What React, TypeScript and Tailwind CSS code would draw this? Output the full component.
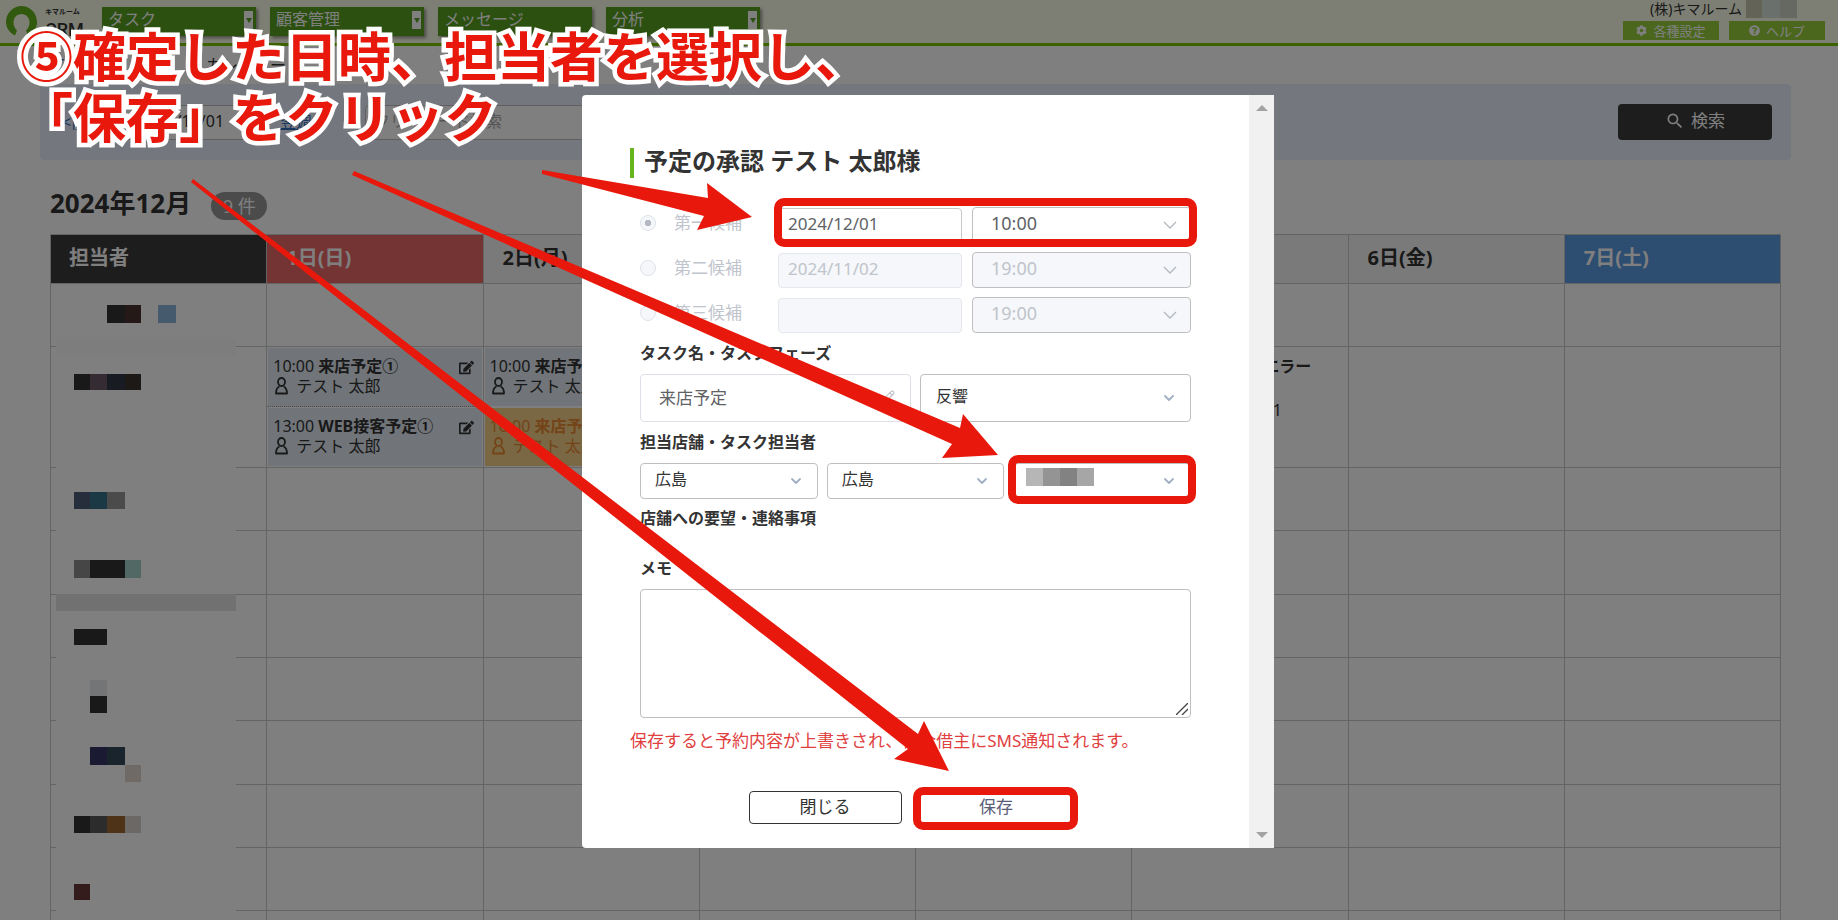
import React from 'react';
import { ChevronDown, Pencil } from 'lucide-react';
import { FaCog, FaEdit, FaQuestionCircle } from 'react-icons/fa';
import { MdSearch } from 'react-icons/md';

const MENUS = [
  { label: 'タスク', dropdown: true },
  { label: '顧客管理', dropdown: true },
  { label: 'メッセージ', dropdown: false },
  { label: '分析', dropdown: true },
];

const DAYS = [
  { label: '1日(日)', style: 'bg-[#ea6868] text-white' },
  { label: '2日(月)', style: 'bg-[#f5f5f5]' },
  { label: '3日(火)', style: 'bg-[#f5f5f5]' },
  { label: '4日(水)', style: 'bg-[#f5f5f5]' },
  { label: '5日(木)', style: 'bg-[#f5f5f5]' },
  { label: '6日(金)', style: 'bg-[#f5f5f5]' },
  { label: '7日(土)', style: 'bg-[#5a9ae2] text-white' },
];

const CANDIDATES = [
  { label: '第一候補', date: '2024/12/01', time: '10:00', active: true },
  { label: '第二候補', date: '2024/11/02', time: '19:00', active: false },
  { label: '第三候補', date: '', time: '19:00', active: false },
];

// Masked staff names: [x, y, width, height, color]
const MASKS: [number, number, number, number, string][] = [
  [0, 105, 180, 700, '#ffffff'],
  [0, 105, 180, 17, '#fafafa'],
  [51, 71, 18, 18, '#333333'],
  [69, 71, 16, 18, '#4a3330'],
  [102, 71, 18, 18, '#8ab4d8'],
  [18, 140, 16, 16, '#333333'],
  [34, 140, 17, 16, '#6a5766'],
  [51, 140, 18, 16, '#333645'],
  [69, 140, 16, 16, '#38332e'],
  [18, 258, 16, 17, '#4c5c78'],
  [34, 258, 17, 17, '#37708a'],
  [51, 258, 18, 17, '#969696'],
  [18, 326, 16, 18, '#8c8c8c'],
  [34, 326, 35, 18, '#333333'],
  [69, 326, 16, 18, '#a4d0c8'],
  [0, 360, 180, 17, '#e2e2e2'],
  [18, 395, 33, 16, '#333333'],
  [34, 446, 17, 16, '#e8eaee'],
  [34, 462, 17, 17, '#333333'],
  [34, 513, 17, 18, '#343464'],
  [51, 513, 18, 18, '#34485a'],
  [69, 531, 16, 17, '#dfd5cd'],
  [18, 582, 16, 17, '#333333'],
  [34, 582, 17, 17, '#585858'],
  [51, 582, 18, 17, '#9c6632'],
  [69, 582, 16, 17, '#d8d0ca'],
  [18, 650, 16, 16, '#683838'],
];

const Logo = () => (
  <a href="#" className="flex w-[82px] items-start gap-2 text-[#333]">
    <svg viewBox="0 0 31 30" className="h-[30px] w-[31px]">
      <path
        d="M9 29.5 C3 26.5 0 21.5 0 16 C0 7 7 0 15.500 0 C24 0 31 7 31 16 C31 21.500 28 26.500 22 29.500 L20 24.500 C22 22.500 23.500 20 23.500 16.500 C23.500 11.500 20 8 15.500 8 C11 8 7.500 11.500 7.500 16.500 C7.500 20 9 22.500 11 24.500 Z"
        fill="#65b51e"
      />
    </svg>
    <span className="flex flex-col gap-1 pt-0.5 whitespace-nowrap">
      <span className="text-[7px] leading-2 font-bold">キマルーム</span>
      <span className="font-['Roboto'] text-lg leading-5 font-medium">CRM</span>
    </span>
  </a>
);

const PersonIcon = () => (
  <svg viewBox="0 0 13 18" className="h-[18px] w-[13px]" fill="none" stroke="currentColor" strokeWidth="1.8">
    <ellipse cx="6.500" cy="5" rx="3.500" ry="4" />
    <path d="M4.500 9.500 C2 10.500 1 12.500 1 16.500 H12 C12 12.500 11 10.500 8.500 9.500" strokeLinejoin="round" />
  </svg>
);

type EventProps = { time: string; title: string; style: string };

const CalendarEvent: React.FC<EventProps> = ({ time, title, style }) => (
  <div className={`flex h-[60px] items-start justify-between overflow-hidden pt-2 pr-2 pl-[5px] leading-5 whitespace-nowrap ${style}`}>
    <div>
      <div className="flex gap-1">
        <span>{time}</span>
        <b>{title}</b>
      </div>
      <div className="flex items-center gap-2 pl-0.5">
        <PersonIcon />
        <span>テスト 太郎</span>
      </div>
    </div>
    <button type="button" aria-label="編集" className="pt-1">
      <FaEdit size={15} />
    </button>
  </div>
);

type SelectProps = {
  label: string;
  value: string;
  size?: string;
  disabled?: boolean;
  thin?: boolean;
  children?: React.ReactNode;
};

const Select: React.FC<SelectProps> = ({ label, value, size = 'h-9 pl-[14px] text-base', disabled, thin, children }) => (
  <div className="relative min-w-0 flex-1">
    <select
      aria-label={label}
      defaultValue={value}
      disabled={disabled}
      className={`block w-full appearance-none rounded border border-[#bfbfbf] pr-8 pb-1 opacity-100 outline-none ${size} ${
        disabled ? 'bg-[#f5f7fa] text-[#c0c4cc]' : thin ? 'bg-white text-[#606266]' : 'bg-white text-[#333]'
      }`}
    >
      <option value={value}>{value}</option>
    </select>
    <span className="pointer-events-none absolute inset-y-0 right-[14px] flex items-center">
      {thin ? (
        <svg viewBox="0 0 14 8" className="h-2 w-[14px]" fill="none" stroke="#b4b8c0" strokeWidth="1.3">
          <path d="M1 1 L7 7 L13 1" />
        </svg>
      ) : (
        <ChevronDown size={16} strokeWidth={2.8} className="text-[#a3b1c6]" />
      )}
    </span>
    {children}
  </div>
);

const Header = () => (
  <header className="flex h-[46px] items-start justify-between border-b-3 border-[#78c400] bg-[#fafee8] pr-[13px] pl-1.5">
    <div className="flex">
      <div className="w-24 pt-1.5">
        <Logo />
      </div>
      <nav className="flex gap-[14px] pt-[7px]">
        {MENUS.map(menu => (
          <button
            key={menu.label}
            type="button"
            className="flex h-[29px] w-[154px] items-start justify-between bg-[#56a020] pr-[3px] pl-1.5 text-base leading-6 text-white shadow-[2px_2px_3px_rgba(0,0,0,0.4)]"
          >
            {menu.label}
            {menu.dropdown && (
              <span className="mt-1 flex h-[18px] w-[9px] items-center justify-center bg-white text-[#56a020]">
                <svg viewBox="0 0 6 5" className="h-[5px] w-1.5">
                  <path d="M0 0 H6 L3 5 Z" fill="currentColor" />
                </svg>
              </span>
            )}
          </button>
        ))}
      </nav>
    </div>
    <div>
      <div className="flex h-[21px] items-start gap-1 pl-[27px] text-sm leading-[18px]">
        <span>(株)キマルーム</span>
        <span className="flex h-[18px]">
          <span className="w-4 bg-[#c8c6b0]" />
          <span className="w-[18px] bg-[#d4e2da]" />
          <span className="w-[17px] bg-[#cdd2c4]" />
        </span>
      </div>
      <div className="flex gap-2.5 text-[13px] text-white">
        <button type="button" className="flex h-[19px] w-24 items-center justify-center gap-1.5 bg-[#97cf3d] leading-4">
          <FaCog size={11} />
          各種設定
        </button>
        <button type="button" className="flex h-[19px] w-24 items-center justify-center gap-1.5 bg-[#97cf3d] leading-4">
          <FaQuestionCircle size={11} />
          ヘルプ
        </button>
      </div>
    </div>
  </header>
);

const SearchPanel = () => (
  <form className="mr-[47px] ml-10 flex h-[76px] items-center justify-between rounded bg-[#e9f1fc] pr-[19px] pl-[22px] text-base">
    <div className="flex items-center">
      <a href="#" className="w-[54px] text-[#2f6fbf]">
        &lt;前週
      </a>
      <input
        aria-label="日付"
        defaultValue="2024/12/01"
        className="h-[35px] w-[154px] rounded border border-[#bfbfbf] bg-white pb-0.5 pl-[22px]"
      />
      <a href="#" className="w-[95px] pl-2.5 text-[#2f6fbf] underline">
        翌週&gt;
      </a>
      <input
        aria-label="フリーワード"
        placeholder="フリーワード検索"
        className="h-[35px] w-[340px] rounded border border-[#bfbfbf] bg-white pb-0.5 pl-2 placeholder:text-[#aaa]"
      />
    </div>
    <button type="submit" className="flex h-9 w-[154px] items-center justify-center gap-1.5 rounded bg-[#3a3a3a] pb-0.5 text-[17px] text-white">
      <MdSearch size={20} />
      検索
    </button>
  </form>
);

const Calendar = () => (
  <div className="relative mr-[57px] ml-[50px]">
    <table className="w-full table-fixed border-collapse text-left [&_td]:border [&_td]:border-[#c8c8c8] [&_td]:p-0 [&_td]:align-top [&_th]:border [&_th]:border-[#c8c8c8]">
      <thead>
        <tr className="h-[49px] text-xl">
          <th className="bg-[#3a3a3a] pb-0.5 pl-[18px] text-white">担当者</th>
          {DAYS.map(day => (
            <th key={day.label} className={`pb-0.5 pl-[19px] ${day.style}`}>
              {day.label}
            </th>
          ))}
        </tr>
      </thead>
      <tbody>
        {Array.from({ length: 10 }, (_, row) =>
          row === 1 ? (
            <tr key={row} className="h-[121px]">
              <td />
              <td>
                <CalendarEvent time="10:00" title="来店予定①" style="border border-b-[#999] border-white [border-bottom-style:dotted] bg-[#e2eaf4]" />
                <CalendarEvent time="13:00" title="WEB接客予定①" style="border border-white bg-[#e2eaf4]" />
              </td>
              <td>
                <CalendarEvent time="10:00" title="来店予定①" style="border border-white bg-[#e2eaf4]" />
                <CalendarEvent time="16:00" title="来店予定①" style="border border-white bg-[#f4d088] text-[#e88830]" />
              </td>
              <td />
              <td />
              <td>
                <div className="pt-[9px] pl-1.5 leading-5">
                  <div className="flex gap-1">
                    <span>10:00</span>
                    <b>メール送信エラー</b>
                  </div>
                  <div className="pb-1">テスト 太郎</div>
                  <div>テスト賃貸物件 101</div>
                </div>
              </td>
              <td />
              <td />
            </tr>
          ) : (
            <tr key={row} className="h-[63px] nth-[3n+1]:nth-[n+4]:h-16">
              {Array.from({ length: 8 }, (_, col) => (
                <td key={col} />
              ))}
            </tr>
          )
        )}
      </tbody>
    </table>
    <svg className="absolute top-0 left-1.5 h-full w-[180px]" aria-hidden="true">
      {MASKS.map(([x, y, width, height, fill], idx) => (
        <rect key={idx} x={x} y={y} width={width} height={height} fill={fill} shapeRendering="crispEdges" />
      ))}
    </svg>
  </div>
);

const ApprovalDialog = () => (
  <div role="dialog" aria-labelledby="dialog-title" className="flex w-[692px] overflow-hidden rounded-l bg-white">
    <form className="min-w-0 flex-1 px-12 pt-[53px] pb-6">
      <h2 id="dialog-title" className="border-l-4 border-[#65b51d] pb-1 pl-2.5 text-2xl leading-[26px] font-bold">
        予定の承認 テスト 太郎様
      </h2>

      <div className="px-2.5 pt-[29px]">
        <div className="flex flex-col gap-[9px] text-[17px]">
          {CANDIDATES.map(candidate => (
            <div key={candidate.label} className="flex items-center">
              <label className="flex w-[138px] items-center gap-[18px] pb-1 leading-6 text-[#c0c4cc]">
                <input
                  type="radio"
                  name="candidate"
                  defaultChecked={candidate.active}
                  disabled
                  className="h-4 w-4 appearance-none rounded-full border border-[#dfe3ea] bg-[#f5f7fa] checked:bg-[radial-gradient(circle,#b4b8c4_3px,transparent_3px)]"
                />
                {candidate.label}
              </label>
              <input
                aria-label={`${candidate.label}の日付`}
                defaultValue={candidate.date}
                disabled={!candidate.active}
                className="mr-2.5 h-[35px] w-[184px] rounded border border-[#c8c8c8] bg-white px-[9px] pb-1 text-[#606266] disabled:border-[#e4e7ed] disabled:bg-[#f5f7fa] disabled:text-[#c0c4cc]"
              />
              <Select
                label={`${candidate.label}の時間`}
                value={candidate.time}
                disabled={!candidate.active}
                size="h-9 pl-[18px] text-lg"
                thin
              />
            </div>
          ))}
        </div>

        <h3 className="mt-2 leading-6 font-bold">タスク名・タスクフェーズ</h3>
        <div className="mt-[9px] flex gap-[9px]">
          <div className="relative min-w-0 flex-1">
            <input
              aria-label="タスク名"
              defaultValue="来店予定"
              className="h-12 w-full rounded border border-[#dcdfe6] pb-1 pl-[18px] text-[17px] text-[#606266]"
            />
            <Pencil size={14} className="pointer-events-none absolute top-4 right-4 text-[#c0c4cc]" />
          </div>
          <Select label="タスクフェーズ" value="反響" size="h-12 pl-[15px] text-base" />
        </div>

        <h3 className="mt-2 leading-6 font-bold">担当店舗・タスク担当者</h3>
        <div className="mt-[9px] flex gap-[9px]">
          <Select label="担当店舗" value="広島" />
          <Select label="担当者の店舗" value="広島" />
          <Select label="タスク担当者" value="">
            <span className="pointer-events-none absolute top-[5px] left-[13px] flex h-[18px] w-[68px]">
              <span className="flex-1 bg-[#b6b6b6]" />
              <span className="flex-1 bg-[#949494]" />
              <span className="flex-1 bg-[#828282]" />
              <span className="flex-1 bg-[#a6a6a6]" />
            </span>
          </Select>
        </div>

        <h3 className="mt-[7px] leading-6 font-bold">店舗への要望・連絡事項</h3>
        <label htmlFor="memo" className="mt-[26px] block leading-6 font-bold">
          メモ
        </label>
        <div className="relative mt-[9px]">
          <textarea id="memo" className="block h-[129px] w-full resize-none rounded border border-[#bfbfbf]" />
          <svg viewBox="0 0 12 12" className="absolute right-[3px] bottom-[3px] h-3 w-3" fill="none" stroke="#444" strokeWidth="1.3">
            <path d="M0 12 L12 0 M6 12 L12 6" />
          </svg>
        </div>
      </div>

      <p className="mt-[11px] text-[17px] leading-6 whitespace-nowrap text-[#e04040]">
        保存すると予約内容が上書きされ、仲介借主にSMS通知されます。
      </p>
      <div className="mt-[38px] flex justify-center gap-[18px] pr-2.5 text-[17px]">
        <button type="button" className="h-[33px] w-[153px] rounded border border-[#333] pb-0.5 leading-7">
          閉じる
        </button>
        <button type="submit" className="h-[33px] w-[153px] rounded pb-0.5 leading-7 text-[#5a5e78]">
          保存
        </button>
      </div>
    </form>

    <div className="flex w-[25px] flex-col items-center justify-between bg-[#f1f1f1] py-2.5" aria-hidden="true">
      <svg viewBox="0 0 12 6" className="h-1.5 w-3">
        <path d="M6 0 L12 6 H0 Z" fill="#a3a3a3" />
      </svg>
      <svg viewBox="0 0 12 6" className="h-1.5 w-3">
        <path d="M0 0 H12 L6 6 Z" fill="#a3a3a3" />
      </svg>
    </div>
  </div>
);

// Tutorial markup drawn above the screen: arrows, frames and the step text
const Annotations = () => (
  <div className="pointer-events-none absolute inset-0 overflow-hidden">
    <svg className="absolute top-0 left-0 h-[920px] w-[1838px]" aria-hidden="true">
      <g fill="none" stroke="#e8190c" strokeWidth="8">
        <rect x="778" y="202" width="415" height="41" rx="6" />
        <rect x="1012" y="459" width="180" height="41" rx="6" />
        <rect x="917" y="791" width="157" height="35" rx="6" />
      </g>
      <g fill="#e8190c">
        <path d="M542 170 L708 198 L707 183 L752 217 L697 230 L704 216 L542 174 Z" />
        <path d="M354 171 L960 428 L963 414 L998 455 L942 458 L952 444 L352 175 Z" />
        <path d="M193 179 L918 734 L924 721 L949 771 L894 759 L908 749 L191 182 Z" />
      </g>
    </svg>
    <p className="absolute top-[26px] left-5 text-[53px] leading-[61px] font-bold whitespace-pre text-[#e8190c] [paint-order:stroke_fill] [-webkit-text-stroke:9px_white]">
      ⑤確定した日時、担当者を選択し、{'\n'}「保存」をクリック
    </p>
  </div>
);

const App: React.FC = () => {
  return (
    <div className="relative h-screen overflow-hidden bg-white font-['Noto_Sans','Noto_Sans_CJK_JP',sans-serif] text-base text-[#333]">
      <Header />
      <div className="flex h-[38px] items-center gap-2 pl-12">
        <a href="#" className="w-[150px] text-[#2f6fbf]">
          TOP
        </a>
        <span>カレンダー</span>
      </div>
      <SearchPanel />
      <div className="flex h-[74px] items-center gap-5 pt-3 pl-[50px]">
        <h1 className="text-[26px] font-bold">2024年12月</h1>
        <span className="mt-1.5 flex h-7 w-14 items-center justify-center rounded-full bg-[#969696] text-lg text-white">9 件</span>
      </div>
      <Calendar />

      <div className="absolute inset-0 flex items-start justify-center bg-black/50 pt-[95px] pl-[18px]">
        <ApprovalDialog />
      </div>
      <Annotations />
    </div>
  );
};

export default App;
